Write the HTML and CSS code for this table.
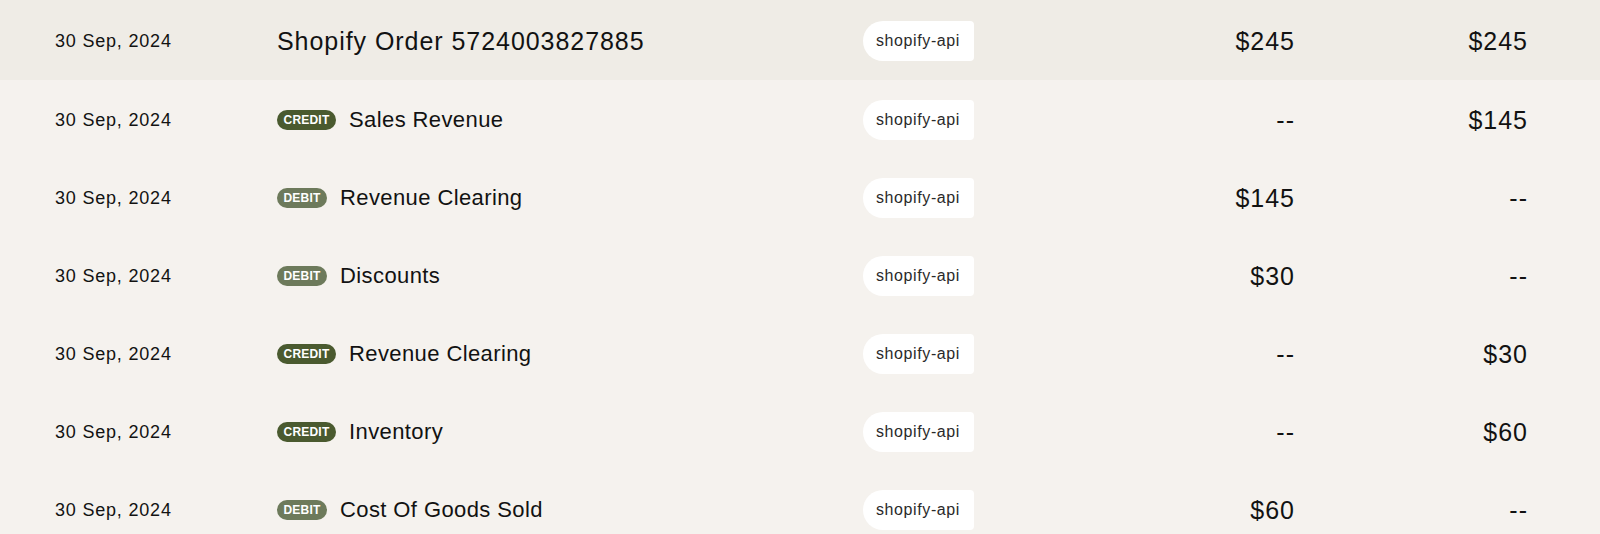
FILE: index.html
```html
<!DOCTYPE html>
<html lang="en">
<head>
    <meta charset="UTF-8">
    <meta name="viewport" content="width=device-width, initial-scale=1.0">
    <title>Journal Entries</title>
    <link rel="stylesheet" href="styles.css">
</head>
<body>
    <div class="ledger">
        <div class="row order">
            <div class="date">30 Sep, 2024</div>
            <div class="desc"><span class="title">Shopify Order 5724003827885</span></div>
            <div class="source"><span class="tag">shopify-api</span></div>
            <div class="amount">$245</div>
            <div class="amount">$245</div>
        </div>
        <div class="row">
            <div class="date">30 Sep, 2024</div>
            <div class="desc"><span class="badge credit">CREDIT</span><span class="account">Sales Revenue</span></div>
            <div class="source"><span class="tag">shopify-api</span></div>
            <div class="amount">--</div>
            <div class="amount">$145</div>
        </div>
        <div class="row">
            <div class="date">30 Sep, 2024</div>
            <div class="desc"><span class="badge debit">DEBIT</span><span class="account">Revenue Clearing</span></div>
            <div class="source"><span class="tag">shopify-api</span></div>
            <div class="amount">$145</div>
            <div class="amount">--</div>
        </div>
        <div class="row">
            <div class="date">30 Sep, 2024</div>
            <div class="desc"><span class="badge debit">DEBIT</span><span class="account">Discounts</span></div>
            <div class="source"><span class="tag">shopify-api</span></div>
            <div class="amount">$30</div>
            <div class="amount">--</div>
        </div>
        <div class="row">
            <div class="date">30 Sep, 2024</div>
            <div class="desc"><span class="badge credit">CREDIT</span><span class="account">Revenue Clearing</span></div>
            <div class="source"><span class="tag">shopify-api</span></div>
            <div class="amount">--</div>
            <div class="amount">$30</div>
        </div>
        <div class="row">
            <div class="date">30 Sep, 2024</div>
            <div class="desc"><span class="badge credit">CREDIT</span><span class="account">Inventory</span></div>
            <div class="source"><span class="tag">shopify-api</span></div>
            <div class="amount">--</div>
            <div class="amount">$60</div>
        </div>
        <div class="row">
            <div class="date">30 Sep, 2024</div>
            <div class="desc"><span class="badge debit">DEBIT</span><span class="account">Cost Of Goods Sold</span></div>
            <div class="source"><span class="tag">shopify-api</span></div>
            <div class="amount">$60</div>
            <div class="amount">--</div>
        </div>
    </div>
</body>
</html>
```

FILE: styles.css
```css
body {
    margin: 0;
    font-family: "Liberation Sans", Arial, sans-serif;
    background-color: #f5f2ee;
    color: #121212;
}
.ledger {
    display: flex;
    flex-direction: column;
}
.row {
    box-sizing: border-box;
    display: grid;
    grid-template-columns: 222px 586px 1fr 233px 233px;
    align-items: center;
    height: 78px;
    padding: 2px 72px 0 55px;
    background-color: #f5f2ee;
}
.row.order {
    height: 80px;
    background-color: #efece6;
}
.date {
    font-size: 18px;
    letter-spacing: 0.8px;
}
.desc {
    display: flex;
    align-items: center;
}
.title {
    font-size: 25px;
    letter-spacing: 0.95px;
}
.account {
    font-size: 22px;
    letter-spacing: 0.4px;
    margin-left: 13px;
}
.badge {
    display: inline-flex;
    align-items: center;
    justify-content: center;
    height: 20px;
    border-radius: 10px;
    color: #fff;
    font-size: 12px;
    font-weight: bold;
    letter-spacing: 0.2px;
}
.badge.credit {
    width: 59px;
    background-color: #4a5a2f;
}
.badge.debit {
    width: 50px;
    background-color: #6d7a5b;
}
.tag {
    display: inline-flex;
    align-items: center;
    height: 40px;
    padding: 0 14px 0 13px;
    background: #fff;
    border-radius: 20px 4px 4px 20px;
    font-size: 16px;
    letter-spacing: 0.6px;
    color: #2a2a2a;
}
.amount {
    text-align: right;
    font-size: 25px;
    letter-spacing: 1px;
}
```
